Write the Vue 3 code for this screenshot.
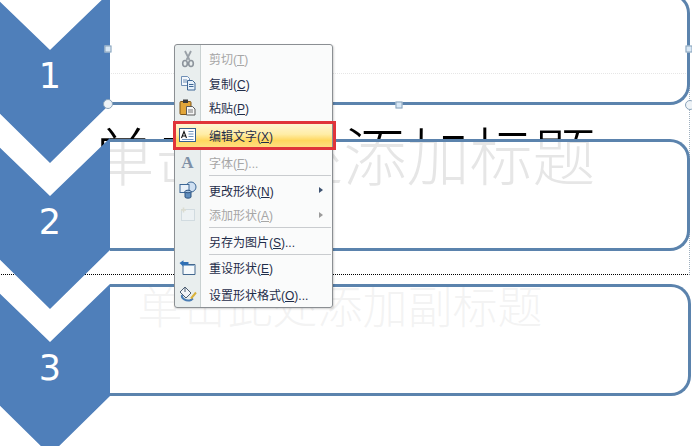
<script setup>
const chevrons = ['one', 'two', 'three']
const numbers = { one: '1', two: '2', three: '3' }
const handles = [
  { kind: 'square', x: 107.5, y: 48.5 },
  { kind: 'circle', x: 107.5, y: 104 },
  { kind: 'square', x: 399, y: 104.5 },
  { kind: 'square', x: 689, y: 48.5 },
  { kind: 'circle', x: 689.5, y: 104.5 }
]
const menu = [
  { icon: 'cut', label: '剪切(', key: 'T', tail: ')', off: true },
  { icon: 'copy', label: '复制(', key: 'C', tail: ')' },
  { icon: 'paste', label: '粘贴(', key: 'P', tail: ')' },
  { gap: 'tall' },
  { icon: 'edit', label: '编辑文字(', key: 'X', tail: ')', hot: true },
  { gap: 'tall' },
  { icon: 'font', label: '字体(', key: 'F', tail: ')...', off: true },
  { sep: 'tall' },
  { icon: 'shape', label: '更改形状(', key: 'N', tail: ')', arrow: true },
  { icon: 'add', label: '添加形状(', key: 'A', tail: ')', arrow: true, off: true },
  { sep: 'short' },
  { icon: '', label: '另存为图片(', key: 'S', tail: ')...' },
  { sep: 'short' },
  { icon: 'reset', label: '重设形状(', key: 'E', tail: ')' },
  { gap: 'short' },
  { icon: 'format', label: '设置形状格式(', key: 'O', tail: ')...' }
]
</script>

<template>
  <div class="canvas">
    <div class="placeholder"></div>
    <div class="title">单击此处添加标题</div>
    <div class="subtitle">单击此处添加副标题</div>

    <div class="box box-one"></div>
    <div class="box box-two"></div>
    <div class="box box-three"></div>

    <div v-for="c in chevrons" :key="c" class="chevron" :class="'chevron-' + c">{{ numbers[c] }}</div>

    <span
      v-for="(h, i) in handles"
      :key="i"
      class="handle"
      :class="h.kind"
      :style="{ left: h.x + 'px', top: h.y + 'px' }"
    ></span>

    <div class="menu">
      <template v-for="(m, i) in menu" :key="i">
        <div v-if="m.sep" class="sep" :class="m.sep"></div>
        <div v-else-if="m.gap" class="gap" :class="m.gap"></div>
        <div v-else class="item" :class="{ off: m.off, hot: m.hot }">
          <span class="ico">
            <svg v-if="m.icon === 'cut'" width="16" height="18" viewBox="0 0 16 18">
              <path d="M5 1l4.500 9M11 1L6.500 10" stroke="#8d949c" stroke-width="1.800" fill="none" />
              <ellipse cx="5" cy="13.500" rx="2.300" ry="3" stroke="#7d858e" stroke-width="1.600" fill="none" />
              <ellipse cx="11" cy="13.500" rx="2.300" ry="3" stroke="#7d858e" stroke-width="1.600" fill="none" />
            </svg>
            <svg v-else-if="m.icon === 'copy'" width="16" height="16" viewBox="0 0 16 16">
              <path d="M1.500 1.500h6l2 2v7h-8z" fill="#f4f8fc" stroke="#6f8fb5" />
              <path d="M3 5h4M3 7h4" stroke="#6f8fb5" />
              <path d="M7.500 5.500h5l2.500 2.500v7H7.500z" fill="#e6f0fa" stroke="#3f6795" />
              <path d="M9 9.500h4.500M9 11.500h4.500" stroke="#3f6795" />
            </svg>
            <svg v-else-if="m.icon === 'paste'" width="17" height="17" viewBox="0 0 17 17">
              <rect x="1" y="2.500" width="11" height="13" rx="1" fill="#e2a63a" stroke="#7c5418" />
              <rect x="4" y="0.500" width="5" height="3.500" fill="#3a3a3a" />
              <path d="M7.500 7.500h6l2.500 2.500v6H7.500z" fill="#f6f6f6" stroke="#5b5b5b" />
              <path d="M9 11h5M9 13h5" stroke="#777" />
            </svg>
            <svg v-else-if="m.icon === 'edit'" width="17" height="14" viewBox="0 0 17 14">
              <rect x="0.500" y="0.500" width="16" height="13" fill="#fff" stroke="#35608f" />
              <path d="M2.500 10L5 3.500 7.500 10M3.500 8h3" stroke="#111" stroke-width="1.100" fill="none" />
              <path d="M9.500 3.500h5M9.500 6h5M9.500 8.500h5M3 11.500h11.500" stroke="#6f93bb" />
            </svg>
            <span v-else-if="m.icon === 'font'" class="glyph">A</span>
            <svg v-else-if="m.icon === 'shape'" width="18" height="18" viewBox="0 0 18 18">
              <circle cx="12" cy="6" r="5" fill="#cfe0f2" stroke="#3c6796" />
              <rect x="1" y="3.500" width="9" height="8" fill="#e9f1f9" stroke="#3c6796" />
              <path d="M6 10.500v5.500c0 1.500 6 1.500 6 0v-5.500" fill="#5f8dbd" stroke="#2c527f" />
              <ellipse cx="9" cy="10.500" rx="3" ry="1.300" fill="#a7c5e3" stroke="#2c527f" />
            </svg>
            <svg v-else-if="m.icon === 'add'" width="16" height="15" viewBox="0 0 16 15">
              <rect x="1.500" y="2.500" width="13" height="11" fill="#edf2f5" stroke="#cdd8de" />
              <path d="M1 3h5M3.500 0.500v5" stroke="#d9d9cc" stroke-width="1.500" />
            </svg>
            <svg v-else-if="m.icon === 'reset'" width="17" height="15" viewBox="0 0 17 15">
              <path d="M4 4.500h12v10H4z" fill="#f5f9fc" stroke="#44688f" />
              <path d="M4.500 5.500H15" stroke="#8fb0d0" />
              <path d="M0.500 3l4-2.800v1.800h5v3h-5v1.800z" fill="#2f6fb5" />
            </svg>
            <svg v-else-if="m.icon === 'format'" width="18" height="17" viewBox="0 0 18 17">
              <path d="M1 6l5-5 6 6-5 5z" fill="#f2f4f7" stroke="#4d5e72" />
              <path d="M3 9c-1 3 4 7 9 5l2-1.500" fill="none" stroke="#4a7db5" stroke-width="2" />
              <path d="M6 1V6" stroke="#4d5e72" />
              <path d="M12 12.500l5-6" stroke="#d9b23c" stroke-width="2" />
            </svg>
          </span>
          <span class="label">{{ m.label }}<u>{{ m.key }}</u>{{ m.tail }}</span>
          <span v-if="m.arrow" class="arrow"></span>
          <span v-if="m.hot" class="frame"></span>
        </div>
      </template>
    </div>
  </div>
</template>

<style>
html, body {
  margin: 0;
  background: #fff;
}
</style>

<style scoped>
.canvas {
  position: relative;
  width: 692px;
  height: 446px;
  overflow: hidden;
  background: #fff;
  font-family: "Liberation Sans", "Noto Sans CJK SC", sans-serif;
}

.placeholder {
  position: absolute;
  left: -10px;
  top: 73px;
  width: 700px;
  height: 202px;
  box-sizing: border-box;
  border: 1px dotted #000;
  border-right-color: #9fb0c0;
}

.title,
.subtitle {
  position: absolute;
  left: 0;
  text-align: center;
  white-space: nowrap;
  font-family: "Liberation Serif", "Noto Sans CJK SC", serif;
}

.title {
  top: 121px;
  width: 687px;
  font-size: 63px;
  font-weight: 300;
  line-height: 76px;
  color: #000;
}

.subtitle {
  top: 281px;
  width: 680px;
  font-size: 45px;
  font-weight: 300;
  line-height: 56px;
  color: #888;
}

.box {
  position: absolute;
  left: 110px;
  width: 580px;
  height: 112px;
  box-sizing: border-box;
  border: 3px solid #5b83ad;
  border-left: 0;
  border-radius: 0 20px 20px 0;
  background: rgba(255, 255, 255, 0.9);
}

.box-one { top: -7px; }
.box-two { top: 138.5px; }
.box-three { top: 283.5px; width: 581px; }

.chevron {
  position: absolute;
  left: -10px;
  width: 120px;
  height: 171px;
  box-sizing: border-box;
  padding-bottom: 3px;
  display: flex;
  align-items: center;
  justify-content: center;
  background: #4f7fba;
  clip-path: polygon(0 0, 60px 58px, 120px 0, 120px 112px, 60px 171px, 0 112px);
  color: #fff;
  font-family: "DejaVu Sans", sans-serif;
  font-size: 35px;
}

.chevron-one { top: -8px; }
.chevron-two { top: 138px; }
.chevron-three { top: 284px; }

.handle {
  position: absolute;
  box-sizing: border-box;
  transform: translate(-50%, -50%);
  background: #d8e8f6;
  border: 1px solid #8aa3ba;
}

.handle.square {
  width: 7px;
  height: 7px;
}

.handle.circle {
  width: 10px;
  height: 10px;
  border-radius: 50%;
  background: #eef3f7;
}

.menu {
  position: absolute;
  left: 174px;
  top: 44px;
  width: 159px;
  height: 264px;
  box-sizing: border-box;
  padding-top: 1.500px;
  border: 1px solid #8b8f93;
  border-radius: 3px;
  background: linear-gradient(to right, #e9eeee 0, #e9eeee 25px, #c9d1d1 25px, #c9d1d1 26px, #fafbfb 26px);
  box-shadow: 1px 1px 2px rgba(0, 0, 0, 0.18);
}

.item {
  position: relative;
  display: flex;
  align-items: center;
  height: 24.500px;
  font-size: 12px;
  color: #1f2d4a;
}

.item.off {
  color: #a6a6a6;
}

.item.hot {
  background: linear-gradient(to bottom, #fff6d6 0%, #ffeda6 45%, #ffd75e 70%, #ffdf86 100%);
}

.ico {
  flex: none;
  width: 25px;
  display: flex;
  align-items: center;
  justify-content: center;
}

.item.off .ico svg {
  opacity: 0.85;
}

.glyph {
  font-family: "Liberation Serif", serif;
  font-size: 17px;
  font-weight: 700;
  line-height: 1;
  color: #7e90a6;
}

.label {
  margin-left: 9px;
  white-space: nowrap;
}

.arrow {
  position: absolute;
  right: 9px;
  top: 9px;
  width: 0;
  height: 0;
  border-left: 4px solid #3e5372;
  border-top: 3px solid transparent;
  border-bottom: 3px solid transparent;
}

.item.off .arrow {
  border-left-color: #9b9b9b;
}

.frame {
  position: absolute;
  left: -2.500px;
  right: -4px;
  top: -2.500px;
  bottom: -2px;
  border: 3px solid #e0343a;
  pointer-events: none;
}

.sep {
  position: relative;
}

.sep::after {
  content: "";
  position: absolute;
  left: 34px;
  right: 1px;
  top: 0;
  height: 1px;
  background: #c9cccf;
}

.sep.tall,
.gap.tall {
  height: 3px;
}

.sep.short,
.gap.short {
  height: 2px;
}
</style>
